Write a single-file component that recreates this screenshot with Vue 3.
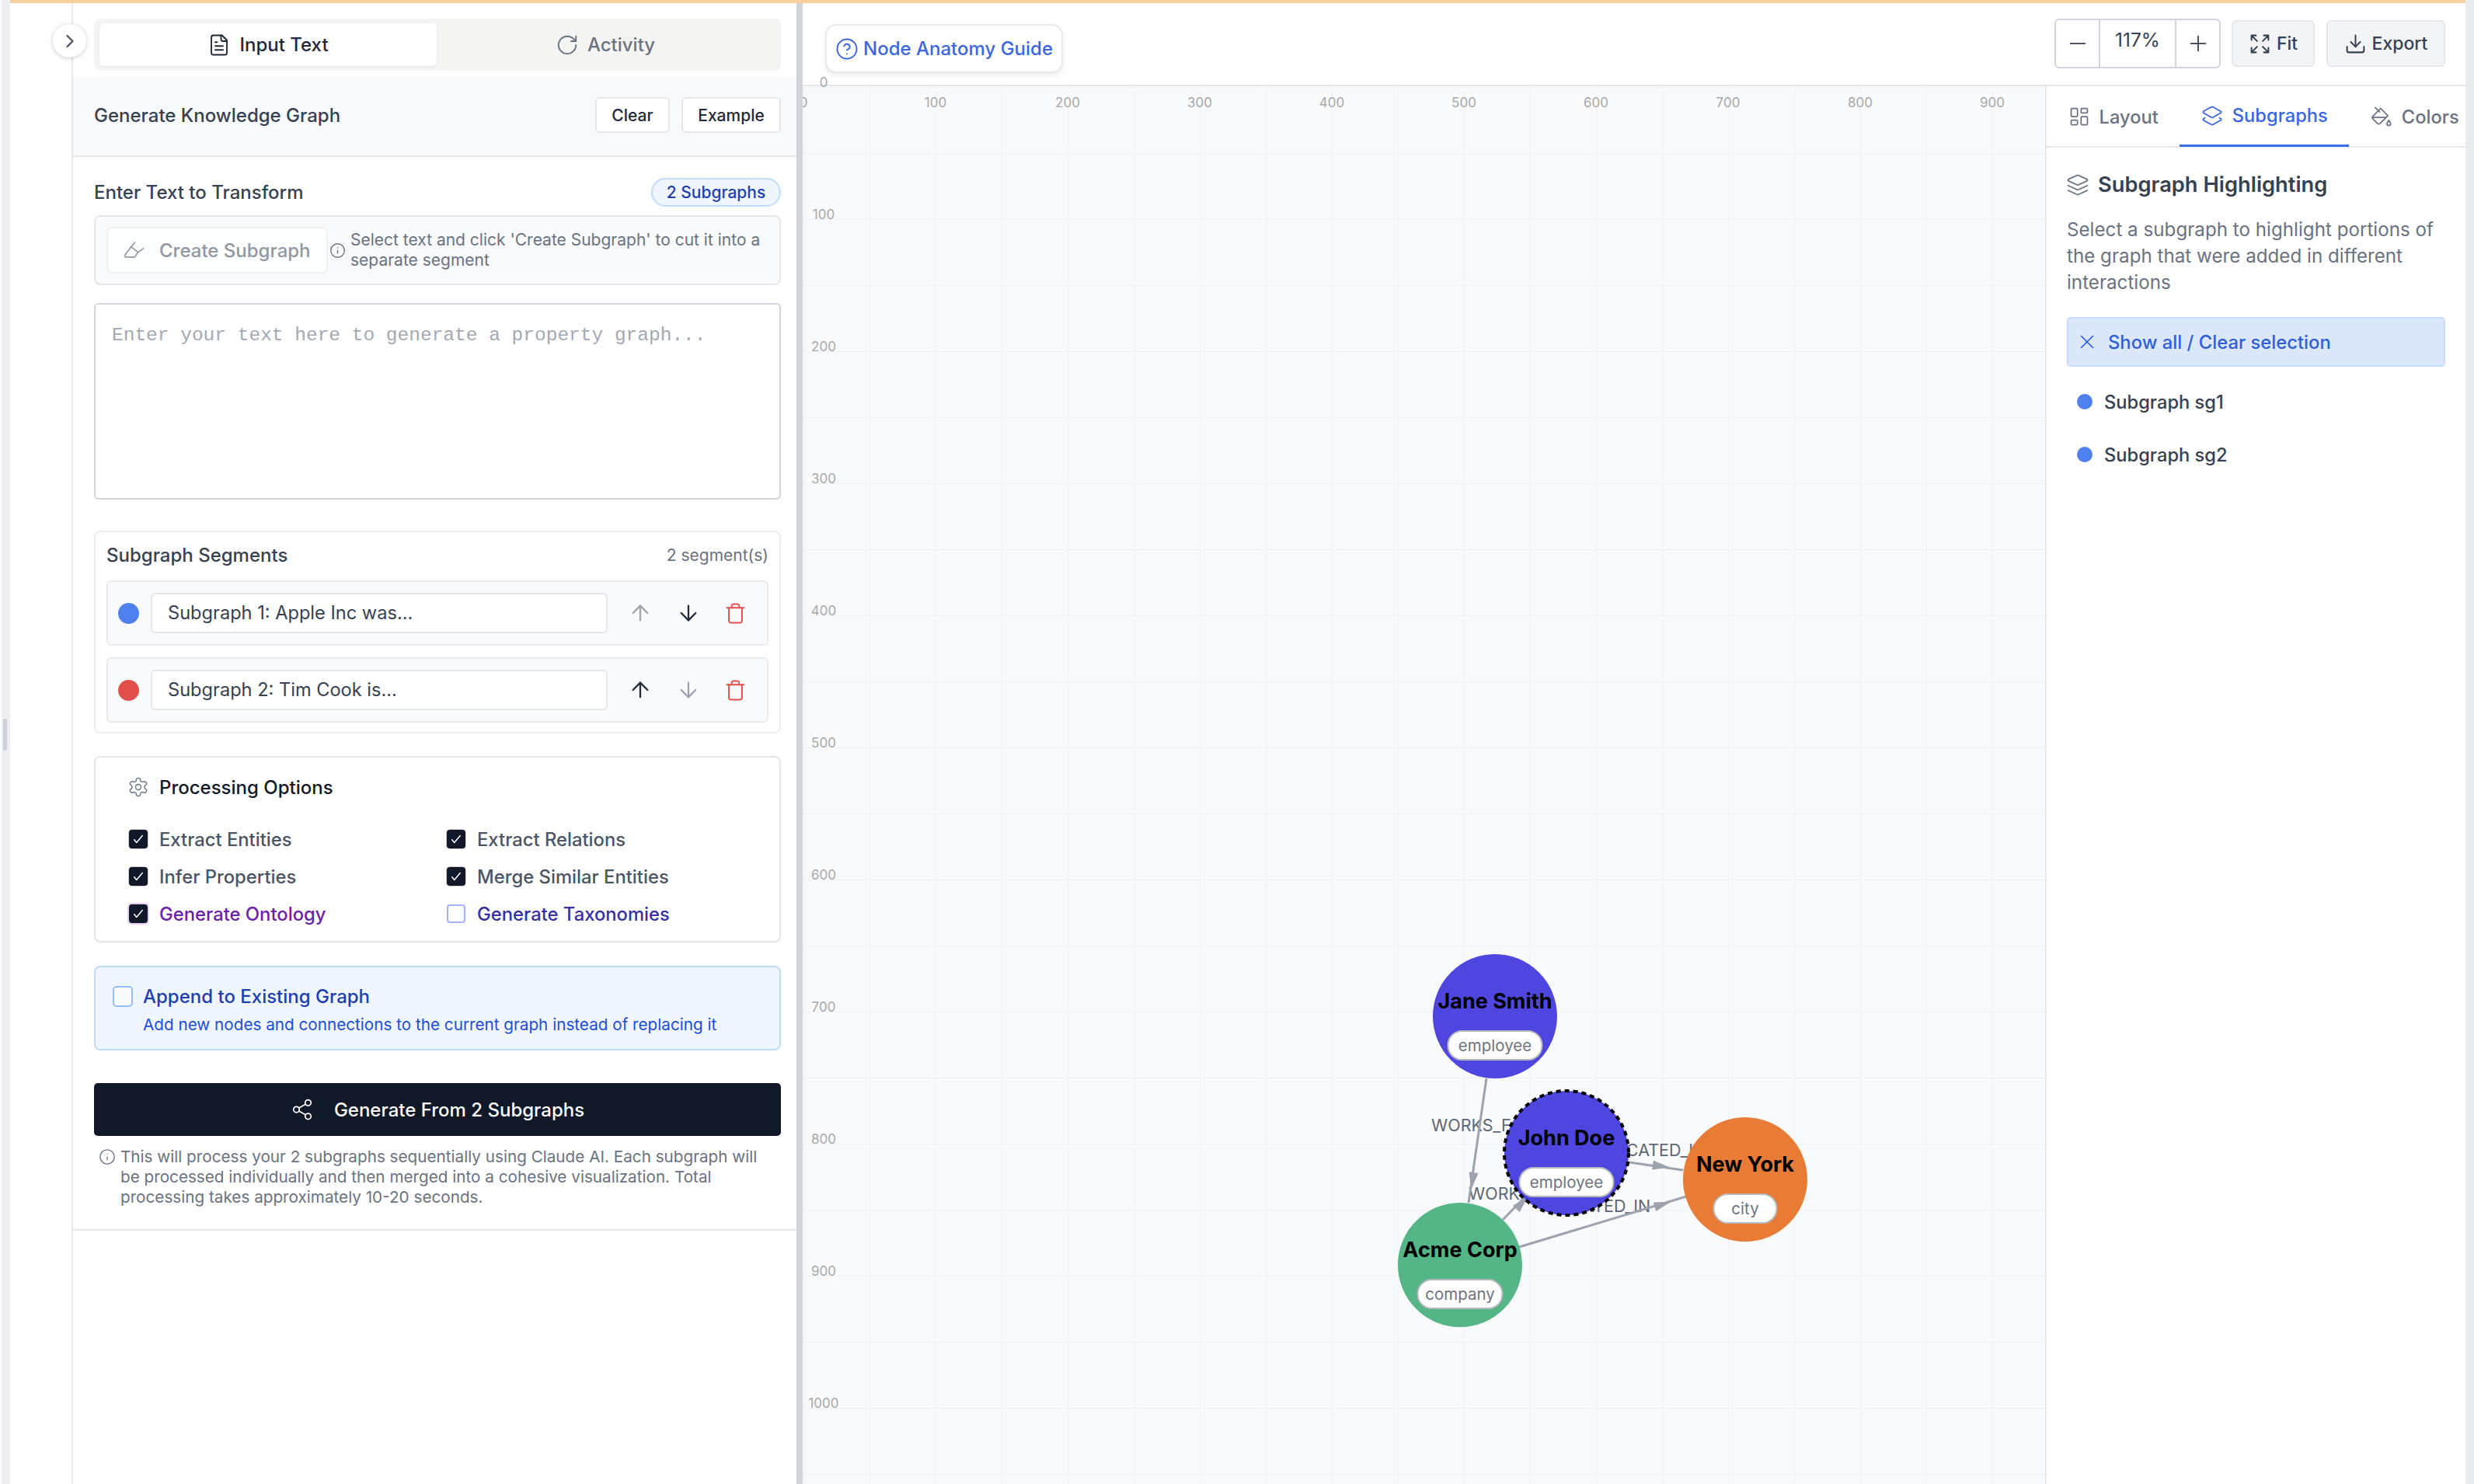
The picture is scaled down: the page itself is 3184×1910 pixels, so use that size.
<script setup>
import { h } from 'vue'

const icons = {
  file: ['M15 2H6a2 2 0 0 0-2 2v16a2 2 0 0 0 2 2h12a2 2 0 0 0 2-2V7Z', 'M14 2v4a2 2 0 0 0 2 2h4', 'M10 9H8', 'M16 13H8', 'M16 17H8'],
  rotate: ['M21 12a9 9 0 1 1-9-9c2.52 0 4.93 1 6.74 2.74L21 8', 'M21 3v5h-5'],
  chevron: ['m9 18 6-6-6-6'],
  highlighter: ['M13 2 1 17v3h12l4-6', 'M8 7l9 7 7-5'],
  info: ['M12 2a10 10 0 1 0 0 20 10 10 0 0 0 0-20Z', 'M12 16v-4', 'M12 8h.01'],
  up: ['m5 12 7-7 7 7', 'M12 19V5'],
  down: ['M12 5v14', 'm19 12-7 7-7-7'],
  trash: ['M3 6h18', 'M19 6v14c0 1-1 2-2 2H7c-1 0-2-1-2-2V6', 'M8 6V4c0-1 1-2 2-2h4c1 0 2 1 2 2v2'],
  gear: ['M12.22 2h-.44a2 2 0 0 0-2 2v.18a2 2 0 0 1-1 1.73l-.43.25a2 2 0 0 1-2 0l-.15-.08a2 2 0 0 0-2.73.73l-.22.38a2 2 0 0 0 .73 2.73l.15.1a2 2 0 0 1 1 1.72v.51a2 2 0 0 1-1 1.74l-.15.09a2 2 0 0 0-.73 2.73l.22.38a2 2 0 0 0 2.73.73l.15-.08a2 2 0 0 1 2 0l.43.25a2 2 0 0 1 1 1.73V20a2 2 0 0 0 2 2h.44a2 2 0 0 0 2-2v-.18a2 2 0 0 1 1-1.73l.43-.25a2 2 0 0 1 2 0l.15.08a2 2 0 0 0 2.73-.73l.22-.39a2 2 0 0 0-.73-2.73l-.15-.08a2 2 0 0 1-1-1.74v-.5a2 2 0 0 1 1-1.74l.15-.09a2 2 0 0 0 .73-2.73l-.22-.38a2 2 0 0 0-2.73-.73l-.15.08a2 2 0 0 1-2 0l-.43-.25a2 2 0 0 1-1-1.73V4a2 2 0 0 0-2-2z', 'M12 9a3 3 0 1 0 0 6 3 3 0 0 0 0-6Z'],
  check: ['M5 13l4 5 10-12'],
  share: ['M18 2a3 3 0 1 0 0 6 3 3 0 0 0 0-6Z', 'M6 9a3 3 0 1 0 0 6 3 3 0 0 0 0-6Z', 'M18 16a3 3 0 1 0 0 6 3 3 0 0 0 0-6Z', 'M8.59 13.51l6.83 3.98', 'M15.41 6.51l-6.82 3.98'],
  help: ['M12 2a10 10 0 1 0 0 20 10 10 0 0 0 0-20Z', 'M9.09 9a3 3 0 0 1 5.83 1c0 2-3 3-3 3', 'M12 17h.01'],
  minus: ['M5 12h14'],
  plus: ['M5 12h14', 'M12 5v14'],
  expand: ['m21 21-6-6m6 6v-4.8m0 4.8h-4.8', 'M3 16.2V21m0 0h4.8M3 21l6-6', 'M21 7.8V3m0 0h-4.8M21 3l-6 6', 'M3 7.8V3m0 0h4.8M3 3l6 6'],
  download: ['M21 15v4a2 2 0 0 1-2 2H5a2 2 0 0 1-2-2v-4', 'M7 10l5 5 5-5', 'M12 15V3'],
  layout: ['M4 3h5a1 1 0 0 1 1 1v7a1 1 0 0 1-1 1H4a1 1 0 0 1-1-1V4a1 1 0 0 1 1-1Z', 'M15 3h5a1 1 0 0 1 1 1v3a1 1 0 0 1-1 1h-5a1 1 0 0 1-1-1V4a1 1 0 0 1 1-1Z', 'M15 12h5a1 1 0 0 1 1 1v7a1 1 0 0 1-1 1h-5a1 1 0 0 1-1-1v-7a1 1 0 0 1 1-1Z', 'M4 16h5a1 1 0 0 1 1 1v3a1 1 0 0 1-1 1H4a1 1 0 0 1-1-1v-3a1 1 0 0 1 1-1Z'],
  layers2: ['M13 13.74a2 2 0 0 1-2 0L2.5 8.87a1 1 0 0 1 0-1.74L11 2.26a2 2 0 0 1 2 0l8.5 4.87a1 1 0 0 1 0 1.74z', 'm20 14.285 1.5.845a1 1 0 0 1 0 1.74L13 21.74a2 2 0 0 1-2 0l-8.5-4.87a1 1 0 0 1 0-1.74l1.5-.845'],
  layers: ['m12.83 2.18a2 2 0 0 0-1.66 0L2.6 6.08a1 1 0 0 0 0 1.83l8.58 3.91a2 2 0 0 0 1.66 0l8.58-3.9a1 1 0 0 0 0-1.83Z', 'm22 17.65-9.17 4.16a2 2 0 0 1-1.66 0L2 17.65', 'm22 12.65-9.17 4.16a2 2 0 0 1-1.66 0L2 12.65'],
  bucket: ['m19 11-8-8-8.6 8.6a2 2 0 0 0 0 2.8l5.2 5.2c.8.8 2 .8 2.8 0L19 11Z', 'm5 2 5 5', 'M2 13h15', 'M22 20a2 2 0 1 1-4 0c0-1.6 1.7-2.4 2-4 .3 1.6 2 2.4 2 4Z'],
  close: ['M18 6 6 18', 'M6 6l12 12']
}

const Icon = (props) =>
  h('svg', { viewBox: '0 0 24 24', fill: 'none', stroke: 'currentColor', 'stroke-width': props.sw || 2, 'stroke-linecap': 'round', 'stroke-linejoin': 'round' },
    icons[props.name].map((d) => h('path', { d })))
Icon.props = ['name', 'sw']

const segments = [
  { name: 'Subgraph 1: Apple Inc was...', color: '#4f80f0', upOff: true, downOff: false },
  { name: 'Subgraph 2: Tim Cook is...', color: '#e2504c', upOff: false, downOff: true }
]

const options = [
  { label: 'Extract Entities', checked: true },
  { label: 'Extract Relations', checked: true },
  { label: 'Infer Properties', checked: true },
  { label: 'Merge Similar Entities', checked: true },
  { label: 'Generate Ontology', checked: true, kind: 'purple' },
  { label: 'Generate Taxonomies', checked: false, kind: 'indigo' }
]

// ruler ticks, 100 units = 170px on the canvas
const xTicks = [100, 200, 300, 400, 500, 600, 700, 800, 900]
const yTicks = [0, 100, 200, 300, 400, 500, 600, 700, 800, 900, 1000]

const nodes = [
  { name: 'Jane Smith', type: 'employee', x: 891, y: 1197, color: '#4f46e0', pill: 121 },
  { name: 'John Doe', type: 'employee', x: 983, y: 1373, color: '#4f46e0', pill: 121, selected: true },
  { name: 'New York', type: 'city', x: 1213, y: 1407, color: '#e87c36', pill: 81 },
  { name: 'Acme Corp', type: 'company', x: 846, y: 1517, color: '#54b687', pill: 109 }
]

const edges = [
  { x1: 880, y1: 1277, x2: 857, y2: 1437, ax: 862, ay: 1409, r: 98 },
  { x1: 901, y1: 1459, x2: 932, y2: 1427, ax: 926, ay: 1437, r: -46 },
  { x1: 1064, y1: 1385, x2: 1133, y2: 1395, ax: 1105, ay: 1390, r: 8 },
  { x1: 922, y1: 1494, x2: 1137, y2: 1429, ax: 1107, ay: 1439, r: -17 }
]

const edgeLabels = [
  { text: 'WORKS_FOR', x: 809, y: 1345, anchor: 'start' },
  { text: 'WORKS_FOR', x: 857, y: 1433, anchor: 'start' },
  { text: 'LOCATED_IN', x: 1097, y: 1377, anchor: 'middle' },
  { text: 'LOCATED_IN', x: 1026, y: 1449, anchor: 'middle' }
]
</script>

<template>
  <div class="app">
    <div class="top-strip"></div>
    <div class="shell">
      <div class="edge-left"><span class="grip"></span></div>

      <div class="rail">
        <button class="collapse"><Icon name="chevron" /></button>
      </div>

      <aside class="panel">
        <div class="tabs-wrap">
          <div class="tabs">
            <div class="tab active"><Icon name="file" sw="1.5" />Input Text</div>
            <div class="tab"><Icon name="rotate" sw="1.5" />Activity</div>
          </div>
        </div>

        <div class="panel-head">
          <span>Generate Knowledge Graph</span>
          <div class="head-btns">
            <button class="small-btn clear">Clear</button>
            <button class="small-btn example">Example</button>
          </div>
        </div>

        <div class="panel-body">
          <div class="title-row">
            <span class="label">Enter Text to Transform</span>
            <span class="badge">2 Subgraphs</span>
          </div>

          <div class="toolbar">
            <button class="create-btn"><Icon name="highlighter" sw="1.6" />Create Subgraph</button>
            <Icon class="info" name="info" sw="1.6" />
            <span class="toolbar-help">Select text and click 'Create Subgraph' to cut it into a separate segment</span>
          </div>

          <div class="textarea">Enter your text here to generate a property graph...</div>

          <div class="segments">
            <div class="seg-head">
              <span class="label">Subgraph Segments</span>
              <span class="seg-count">2 segment(s)</span>
            </div>
            <div v-for="s in segments" :key="s.name" class="seg-row">
              <span class="seg-dot" :style="{ background: s.color }"></span>
              <div class="seg-input">{{ s.name }}</div>
              <Icon class="seg-icon" :class="{ off: s.upOff }" name="up" sw="1.7" />
              <Icon class="seg-icon" :class="{ off: s.downOff }" name="down" sw="1.7" />
              <Icon class="seg-icon trash" name="trash" sw="1.6" />
            </div>
          </div>

          <div class="options">
            <div class="options-title"><Icon name="gear" sw="1.2" />Processing Options</div>
            <div class="options-grid">
              <div v-for="o in options" :key="o.label" class="option" :class="o.kind">
                <span class="box" :class="{ checked: o.checked }"><Icon v-if="o.checked" name="check" sw="2" /></span>
                {{ o.label }}
              </div>
            </div>
          </div>

          <div class="append">
            <span class="append-box"></span>
            <div>
              <div class="append-title">Append to Existing Graph</div>
              <div class="append-desc">Add new nodes and connections to the current graph instead of replacing it</div>
            </div>
          </div>

          <button class="generate"><Icon name="share" sw="1.4" />Generate From 2 Subgraphs</button>

          <div class="note">
            <Icon name="info" sw="1.5" />
            <span>This will process your 2 subgraphs sequentially using Claude AI. Each subgraph will be processed individually and then merged into a cohesive visualization. Total processing takes approximately 10-20 seconds.</span>
          </div>
        </div>
      </aside>

      <div class="handle"></div>

      <main class="main">
        <header class="topbar">
          <button class="guide"><Icon name="help" sw="1.5" />Node Anatomy Guide</button>
          <div class="controls">
            <div class="zoom">
              <span class="zoom-btn"><Icon name="minus" sw="1.5" /></span>
              <span class="zoom-value">117%</span>
              <span class="zoom-btn"><Icon name="plus" sw="1.5" /></span>
            </div>
            <button class="grey-btn fit"><Icon name="expand" sw="1.7" />Fit</button>
            <button class="grey-btn export"><Icon name="download" sw="1.7" />Export</button>
          </div>
        </header>

        <div class="content">
          <div class="canvas">
            <svg class="graph" width="1599" height="1799" viewBox="0 0 1599 1799">
              <text v-for="t in xTicks" :key="'x' + t" class="tick" :x="t * 1.7 + 1" y="27" text-anchor="middle">{{ t }}</text>
              <text x="1" y="27" class="tick" text-anchor="middle">0</text>
              <text v-for="t in yTicks" :key="'y' + t" class="tick" x="27" :y="t * 1.7 + 1" text-anchor="middle">{{ t }}</text>

              <text v-for="l in edgeLabels" :key="l.x" class="edge-label" :x="l.x" :y="l.y" :text-anchor="l.anchor">{{ l.text }}</text>

              <g v-for="e in edges" :key="e.x1">
                <line :x1="e.x1" :y1="e.y1" :x2="e.x2" :y2="e.y2" class="edge" />
                <polygon points="-11,-6 11,0 -11,6" class="arrow" :transform="`translate(${e.ax} ${e.ay}) rotate(${e.r})`" />
              </g>

              <g v-for="n in nodes" :key="n.name" :transform="`translate(${n.x} ${n.y})`">
                <circle r="80" :fill="n.color" :class="{ selected: n.selected }" />
                <text class="node-name" y="-10" text-anchor="middle">{{ n.name }}</text>
                <rect :x="-n.pill / 2" y="19" :width="n.pill" height="37" rx="18" class="pill" />
                <text class="node-type" y="45" text-anchor="middle">{{ n.type }}</text>
              </g>
            </svg>
          </div>

          <aside class="side">
            <div class="side-tabs">
              <div class="side-tab"><Icon name="layout" sw="1.5" />Layout</div>
              <div class="side-tab active"><Icon name="layers2" sw="1.5" />Subgraphs</div>
              <div class="side-tab"><Icon name="bucket" sw="1.5" />Colors</div>
            </div>
            <div class="side-body">
              <h3 class="side-title"><Icon name="layers" sw="1.4" />Subgraph Highlighting</h3>
              <p class="side-desc">Select a subgraph to highlight portions of the graph that were added in different interactions</p>
              <button class="show-all"><Icon name="close" sw="1.4" />Show all / Clear selection</button>
              <div class="sg-item"><span class="sg-dot"></span>Subgraph sg1</div>
              <div class="sg-item"><span class="sg-dot"></span>Subgraph sg2</div>
            </div>
          </aside>
        </div>
      </main>

      <div class="edge-right"></div>
    </div>
  </div>
</template>

<style>
html, body {
  margin: 0;
  background: #fff;
}
</style>

<style scoped>
* {
  box-sizing: border-box;
}
svg {
  display: block;
  flex-shrink: 0;
}
button {
  font-family: inherit;
  margin: 0;
  cursor: pointer;
}
.app {
  width: 3184px;
  height: 1910px;
  overflow: hidden;
  display: flex;
  flex-direction: column;
  font-family: Inter, "Liberation Sans", sans-serif;
  color: #374151;
  background: #fff;
}
.top-strip {
  height: 4px;
  margin-left: 13px;
  margin-right: 11px;
  background: #f9cf9f;
  flex-shrink: 0;
}
.shell {
  flex: 1;
  display: flex;
  min-height: 0;
}
.edge-left {
  width: 11px;
  margin-left: 2px;
  margin-top: -4px;
  background: #eceef1;
  position: relative;
  flex-shrink: 0;
}
.grip {
  position: absolute;
  left: 2px;
  top: 925px;
  width: 5px;
  height: 41px;
  border-radius: 3px;
  background: #cdd1d7;
}
.edge-right {
  width: 11px;
  margin-top: -4px;
  background: #e9ebee;
  flex-shrink: 0;
}
.rail {
  width: 81px;
  border-right: 2px solid #e8eaed;
  position: relative;
  flex-shrink: 0;
}
.collapse {
  position: absolute;
  left: 55px;
  top: 27px;
  width: 43px;
  height: 43px;
  padding: 0;
  border: none;
  border-radius: 50%;
  background: #fff;
  box-shadow: 0 1px 6px rgba(0, 0, 0, 0.2);
  color: #4b5563;
  display: flex;
  align-items: center;
  justify-content: center;
  z-index: 3;
}
.collapse svg {
  width: 28px;
  height: 28px;
}

/* left panel */
.panel {
  width: 931px;
  flex-shrink: 0;
  display: flex;
  flex-direction: column;
}
.tabs-wrap {
  padding: 20px 20px 8px 27px;
}
.tabs {
  height: 67px;
  padding: 6px 9px 6px 7px;
  background: #f4f4f3;
  border-radius: 8px;
  display: flex;
}
.tab {
  flex: 1;
  display: flex;
  align-items: center;
  justify-content: center;
  gap: 11px;
  font-size: 24px;
  font-weight: 500;
  color: #6b7280;
  border-radius: 6px;
}
.tab svg {
  width: 30px;
  height: 30px;
}
.tab.active {
  background: #fff;
  color: #1f2937;
  box-shadow: 0 1px 3px rgba(0, 0, 0, 0.06);
}
.panel-head {
  height: 103px;
  padding: 0 20px 3px 27px;
  background: #f8f9fb;
  border-bottom: 2px solid #e5e7eb;
  display: flex;
  align-items: center;
  justify-content: space-between;
  font-size: 24px;
  font-weight: 500;
  color: #374151;
  flex-shrink: 0;
}
.head-btns {
  display: flex;
  gap: 15px;
}
.small-btn {
  height: 46px;
  border: 2px solid #e5e7eb;
  border-radius: 6px;
  background: #fff;
  font-size: 21px;
  font-weight: 500;
  color: #1f2937;
  padding: 0;
}
.clear {
  width: 96px;
}
.example {
  width: 128px;
}
.panel-body {
  padding: 27px 20px 28px 27px;
  border-bottom: 2px solid #e5e7eb;
}
.title-row {
  display: flex;
  justify-content: space-between;
  align-items: center;
  height: 37px;
  margin-bottom: 11px;
}
.label {
  font-size: 24px;
  font-weight: 500;
  color: #374151;
}
.badge {
  width: 167px;
  height: 37px;
  border-radius: 19px;
  background: #eff6ff;
  border: 2px solid #bfdbfe;
  color: #1e40af;
  font-size: 21px;
  font-weight: 500;
  display: flex;
  align-items: center;
  justify-content: center;
}
.toolbar {
  height: 90px;
  padding: 0 14px;
  background: #f9fafb;
  border: 2px solid #e5e7eb;
  border-radius: 8px;
  display: flex;
  align-items: center;
  margin-bottom: 23px;
}
.create-btn {
  width: 285px;
  height: 60px;
  flex-shrink: 0;
  border: 2px solid #f0f1f3;
  border-radius: 7px;
  background: #fcfdfd;
  display: flex;
  align-items: center;
  gap: 20px;
  padding: 0 0 0 21px;
  font-size: 24px;
  font-weight: 500;
  color: #9298a2;
}
.create-btn svg {
  width: 25px;
  height: 25px;
}
.info {
  width: 21px;
  height: 21px;
  margin: 0 6px 0 2px;
  color: #6b7280;
}
.toolbar-help {
  font-size: 21px;
  line-height: 26px;
  color: #6b7280;
}
.textarea {
  height: 253px;
  border: 2px solid #d1d5db;
  border-radius: 6px;
  padding: 25px 21px;
  font-family: "Liberation Mono", monospace;
  font-size: 24.5px;
  line-height: 30px;
  color: #a3a9b3;
  margin-bottom: 40px;
}
.segments {
  height: 261px;
  padding: 12px 14px 0;
  border: 2px solid #eceef1;
  border-radius: 8px;
  margin-bottom: 29px;
}
.seg-head {
  display: flex;
  justify-content: space-between;
  align-items: center;
  height: 34px;
  margin-bottom: 16px;
}
.seg-count {
  font-size: 21px;
  color: #6b7280;
}
.seg-row {
  height: 84px;
  margin-bottom: 15px;
  padding: 0 13px;
  background: #f9fafb;
  border: 2px solid #e9ebee;
  border-radius: 6px;
  display: flex;
  align-items: center;
}
.seg-dot {
  width: 27px;
  height: 27px;
  border-radius: 50%;
  flex-shrink: 0;
  margin-right: 15px;
}
.seg-input {
  width: 588px;
  height: 52px;
  margin-right: 26px;
  padding-left: 20px;
  background: #fff;
  border: 2px solid #e5e7eb;
  border-radius: 6px;
  font-size: 23.6px;
  line-height: 48px;
  color: #374151;
  flex-shrink: 0;
}
.seg-icon {
  width: 32px;
  height: 32px;
  margin-right: 30px;
  color: #1f2937;
}
.seg-icon.off {
  color: #9ca3af;
}
.seg-icon.trash {
  width: 29px;
  height: 29px;
  margin: 0;
  color: #e2504c;
}
.options {
  height: 240px;
  padding: 26px 43px 0;
  border: 2px solid #e5e7eb;
  border-radius: 8px;
  margin-bottom: 30px;
  box-shadow: 0 1px 2px rgba(0, 0, 0, 0.04);
}
.options-title {
  display: flex;
  align-items: center;
  gap: 13px;
  height: 24px;
  margin-bottom: 43px;
  font-size: 24px;
  font-weight: 500;
  color: #111827;
}
.options-title svg {
  width: 28px;
  height: 28px;
  margin-left: -2px;
  color: #6b7280;
}
.options-grid {
  display: grid;
  grid-template-columns: 409px 1fr;
  grid-auto-rows: 24px;
  row-gap: 24px;
}
.option {
  display: flex;
  align-items: center;
  gap: 15px;
  font-size: 23.8px;
  font-weight: 500;
  color: #4b5563;
}
.option.purple {
  color: #6b21a8;
}
.option.indigo {
  color: #3730a3;
}
.box {
  width: 24px;
  height: 24px;
  border-radius: 4px;
  flex-shrink: 0;
  border: 2px solid #a5b4fc;
  color: #fff;
}
.box.checked {
  background: #111827;
  border: none;
  padding: 3px;
  box-shadow: 0 0 0 1px rgba(17, 24, 39, 0.2);
}
.purple .box.checked {
  box-shadow: 0 0 0 2px #e3cff7;
}
.append {
  height: 109px;
  padding: 24px 22px 0;
  background: #eff6ff;
  border: 2px solid #bfdbfe;
  border-radius: 8px;
  display: flex;
  gap: 13px;
  margin-bottom: 42px;
}
.append-box {
  width: 26px;
  height: 27px;
  border: 2px solid #93bdfb;
  border-radius: 5px;
  background: #f8fbff;
  flex-shrink: 0;
}
.append-title {
  font-size: 24px;
  font-weight: 500;
  line-height: 28px;
  color: #1e40af;
}
.append-desc {
  margin-top: 8px;
  font-size: 20.7px;
  line-height: 28px;
  color: #1d4ed8;
}
.generate {
  width: 100%;
  height: 68px;
  border: none;
  border-radius: 5px;
  background: #111827;
  color: #fff;
  font-size: 24px;
  font-weight: 500;
  display: flex;
  align-items: center;
  justify-content: center;
  gap: 26px;
  padding: 0;
  margin-bottom: 14px;
}
.generate svg {
  width: 30px;
  height: 30px;
}
.note {
  display: flex;
  gap: 6px;
  padding-left: 6px;
  padding-right: 24px;
  font-size: 20.7px;
  line-height: 26px;
  color: #6b7280;
}
.note svg {
  width: 22px;
  height: 22px;
  margin-top: 2px;
}
.handle {
  width: 8px;
  margin-top: 0;
  background: #d1d5db;
  flex-shrink: 0;
  z-index: 2;
}

/* main area */
.main {
  flex: 1;
  min-width: 0;
  display: flex;
  flex-direction: column;
}
.topbar {
  height: 107px;
  flex-shrink: 0;
  padding: 0 26px 0 29px;
  border-bottom: 2px solid #e5e7eb;
  display: flex;
  align-items: flex-start;
  justify-content: space-between;
  position: relative;
}
.guide {
  margin-top: 27px;
  width: 306px;
  height: 63px;
  border: 2px solid #e8eaef;
  border-radius: 14px;
  background: #fff;
  box-shadow: 0 3px 6px rgba(0, 0, 0, 0.08);
  color: #3b66e0;
  font-size: 24px;
  font-weight: 500;
  display: flex;
  align-items: center;
  gap: 6px;
  padding: 0 0 0 11px;
  position: relative;
  z-index: 1;
}
.guide svg {
  width: 30px;
  height: 30px;
}
.controls {
  display: flex;
  align-items: center;
  margin-top: 20px;
}
.zoom {
  display: flex;
  width: 214px;
  height: 64px;
  border: 2px solid #d1d5db;
  border-radius: 6px;
  margin-right: 14px;
}
.zoom-btn {
  width: 55px;
  display: flex;
  align-items: center;
  justify-content: center;
  color: #4b5563;
}
.zoom-btn svg {
  width: 32px;
  height: 32px;
}
.zoom-value {
  flex: 1;
  text-align: center;
  font-size: 24.5px;
  line-height: 50px;
  color: #374151;
  border-left: 2px solid #d1d5db;
  border-right: 2px solid #d1d5db;
}
.grey-btn {
  height: 60px;
  border: 2px solid #e5e7eb;
  border-radius: 6px;
  background: #f3f4f6;
  color: #374151;
  font-size: 23px;
  font-weight: 500;
  display: flex;
  align-items: center;
  justify-content: center;
  gap: 7px;
  padding: 0;
}
.grey-btn svg {
  width: 29px;
  height: 29px;
}
.fit {
  width: 107px;
  margin-right: 15px;
}
.export {
  width: 153px;
}
.content {
  flex: 1;
  display: flex;
  min-height: 0;
}
.canvas {
  flex: 1;
  min-width: 0;
  position: relative;
  background-color: #f9fafb;
  background-image:
    linear-gradient(#f0f1f3 1px, transparent 1px),
    linear-gradient(90deg, #f0f1f3 1px, transparent 1px);
  background-size: 85px 85px;
  background-position: 0 1px, 1px 0;
}
.graph {
  position: absolute;
  left: 0;
  top: 0;
  overflow: visible;
  font-family: Inter, "Liberation Sans", sans-serif;
}
.tick {
  font-size: 17px;
  fill: #a8a8a8;
}
.edge-label {
  font-size: 21.5px;
  fill: #5f6775;
}
.edge {
  stroke: #9ca3af;
  stroke-width: 3;
}
.arrow {
  fill: #9ca3af;
}
.selected {
  stroke: #000;
  stroke-width: 4;
  stroke-dasharray: 6 5;
}
.node-name {
  font-size: 27px;
  font-weight: 700;
  fill: #000;
}
.pill {
  fill: #fff;
  stroke: #b6b8be;
  stroke-width: 2;
}
.node-type {
  font-size: 20.5px;
  fill: #6f7480;
}

/* right side panel */
.side {
  width: 541px;
  flex-shrink: 0;
  border-left: 2px solid #e5e7eb;
  background: #fff;
  overflow: hidden;
}
.side-tabs {
  height: 79px;
  border-bottom: 2px solid #e5e7eb;
  display: flex;
}
.side-tab {
  height: 78px;
  padding: 0 27.5px;
  display: flex;
  align-items: center;
  gap: 12px;
  font-size: 23.7px;
  font-weight: 500;
  color: #6b7280;
  flex-shrink: 0;
}
.side-tab svg {
  width: 28px;
  height: 28px;
}
.side-tab.active {
  color: #3b66e0;
  border-bottom: 3px solid #3b6fe8;
}
.side-body {
  padding: 26px 26px 0 26px;
}
.side-title {
  margin: 0 0 19px;
  display: flex;
  align-items: center;
  gap: 11px;
  font-size: 27.3px;
  line-height: 44px;
  font-weight: 600;
  color: #374151;
}
.side-title svg {
  width: 30px;
  height: 30px;
  margin-left: -1px;
  color: #6b7280;
}
.side-desc {
  margin: 0 0 27px;
  font-size: 24.2px;
  line-height: 34px;
  color: #6b7280;
}
.show-all {
  width: 100%;
  height: 64px;
  border: 2px solid #c8daf9;
  border-radius: 5px;
  background: #dbe7fb;
  color: #2f5fd8;
  font-size: 23.8px;
  font-weight: 500;
  display: flex;
  align-items: center;
  gap: 12px;
  padding: 0 0 0 9px;
  margin-bottom: 11px;
}
.show-all svg {
  width: 30px;
  height: 30px;
}
.sg-item {
  height: 68px;
  display: flex;
  align-items: center;
  gap: 15px;
  padding-left: 13px;
  font-size: 23.7px;
  font-weight: 500;
  color: #374151;
}
.sg-dot {
  width: 20px;
  height: 20px;
  border-radius: 50%;
  background: #4f80f0;
}
</style>
